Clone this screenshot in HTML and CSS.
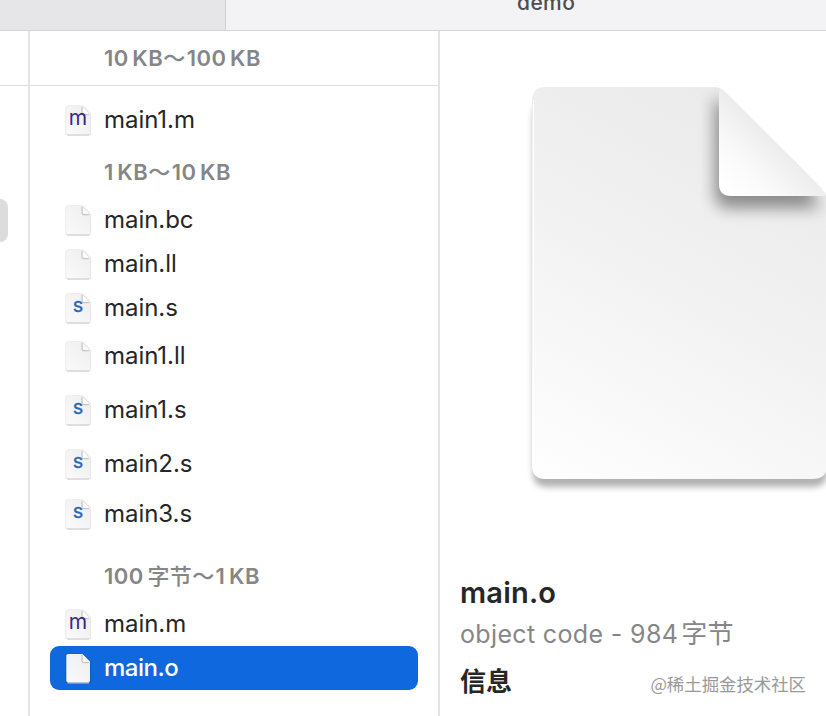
FILE: index.html
```html
<!DOCTYPE html>
<html lang="zh-CN">
<head>
<meta charset="utf-8">
<title>demo</title>
<link rel="stylesheet" href="styles.css">
</head>
<body>
<svg class="defs" width="0" height="0" aria-hidden="true">
  <defs>
    <linearGradient id="page" x1="1" y1="0" x2="0" y2="1">
      <stop offset="0" stop-color="#eeeeee"/><stop offset="1" stop-color="#fafafa"/>
    </linearGradient>
    <symbol id="doc" viewBox="0 0 30 34">
      <path d="M5 2H19.500L27.500 10V29Q27.500 31 25.500 31H5Q3 31 3 29V4Q3 2 5 2Z" fill="none" stroke="#000" stroke-opacity=".09" stroke-width="1.300"/>
      <path d="M4.800 30.800H25.700" stroke="#cecece" stroke-width="1.200" stroke-linecap="round"/>
      <path d="M5 2H19.500L27 9.500V28.500Q27 30.300 25.300 30.300H5Q3.300 30.300 3.300 28.500V3.700Q3.300 2 5 2Z" fill="url(#page)"/>
      <path d="M19.500 2.500V8.500Q19.500 10.200 21 10.200H27Z" fill="#fcfcfc"/>
      <path d="M19 3V9Q19 10.700 20.700 10.700H26" fill="none" stroke="#c6c6c6" stroke-width="1.200"/>
      <path d="M19.500 2.500L27 10" fill="none" stroke="#e2e2e2" stroke-width=".8"/>
    </symbol>
  </defs>
</svg>
<div class="window">
  <header class="bar">
    <div class="bar-side"></div>
    <div class="bar-title"><span>demo</span></div>
  </header>
  <main class="columns">
    <section class="col-left"><div class="strip"></div><div class="left-selection"></div></section>
    <section class="col-files">
      <h2 class="group group-first"><span>10 KB<i>～</i>100 KB</span></h2>
      <div class="list">
        <div class="row"><span class="icon"><svg><use href="#doc"/></svg><b class="m">m</b></span><span class="name">main1.m</span></div>
        <h2 class="group group-mid"><span>1 KB<i>～</i>10 KB</span></h2>
        <div class="row"><span class="icon"><svg><use href="#doc"/></svg></span><span class="name">main.bc</span></div>
        <div class="row"><span class="icon"><svg><use href="#doc"/></svg></span><span class="name">main.ll</span></div>
        <div class="row"><span class="icon"><svg><use href="#doc"/></svg><b class="s">s</b></span><span class="name">main.s</span></div>
        <div class="row gap-s"><span class="icon"><svg><use href="#doc"/></svg></span><span class="name">main1.ll</span></div>
        <div class="row gap-l"><span class="icon"><svg><use href="#doc"/></svg><b class="s">s</b></span><span class="name">main1.s</span></div>
        <div class="row gap-l"><span class="icon"><svg><use href="#doc"/></svg><b class="s">s</b></span><span class="name">main2.s</span></div>
        <div class="row gap-m"><span class="icon"><svg><use href="#doc"/></svg><b class="s">s</b></span><span class="name">main3.s</span></div>
        <h2 class="group group-last"><span>100 <i>字节～</i>1 KB</span></h2>
        <div class="row"><span class="icon"><svg><use href="#doc"/></svg><b class="m">m</b></span><span class="name">main.m</span></div>
        <div class="row selected"><span class="icon"><svg><use href="#doc"/></svg></span><span class="name">main.o</span></div>
      </div>
    </section>
    <section class="preview">
      <svg class="big-doc" viewBox="0 0 326 440">
        <defs>
          <linearGradient id="sheet" gradientUnits="userSpaceOnUse" x1="270" y1="70" x2="70" y2="430">
            <stop offset="0" stop-color="#ebebeb"/><stop offset=".4" stop-color="#f1f1f1"/><stop offset="1" stop-color="#fefefe"/>
          </linearGradient>
          <linearGradient id="fold" gradientUnits="userSpaceOnUse" x1="276" y1="76" x2="226" y2="128">
            <stop offset="0" stop-color="#ebebeb"/><stop offset=".6" stop-color="#fafafa"/><stop offset="1" stop-color="#fff"/>
          </linearGradient>
          <clipPath id="sheet-clip"><path d="M45 27H214Q220 27 224 31L321 128Q327 134 327 143V405Q327 419 313 419H45Q33 419 33 405V41Q33 27 45 27Z"/></clipPath>
          <filter id="soft" x="-20%" y="-20%" width="140%" height="140%"><feGaussianBlur stdDeviation="3"/></filter>
          <filter id="foldsoft" x="-40%" y="-40%" width="180%" height="180%"><feGaussianBlur stdDeviation="8"/></filter>
        </defs>
        <path d="M47 42H214L327 145V413Q327 427 313 427H47Q33 427 33 413V56Q33 42 47 42Z" opacity=".3" filter="url(#soft)"/>
        <path d="M45 27H214Q220 27 224 31L321 128Q327 134 327 143V405Q327 419 313 419H45Q32 419 32 405V41Q32 27 45 27Z" fill="url(#sheet)"/>
        <g clip-path="url(#sheet-clip)">
          <path d="M215 36V134Q215 148 229 148H320L300 110Z" opacity=".42" filter="url(#foldsoft)"/>
          <path d="M33.500 40V406" stroke="#fff" stroke-width="1.200"/>
        </g>
        <path d="M219 29Q221 28 224 31L321 128Q324 131 325 136H231Q219 136 219 124Z" fill="url(#fold)"/>
      </svg>
      <div class="info">
        <h1><span>main.o</span></h1>
        <p class="kind"><span>object code - 984<i>字节</i></span></p>
        <div class="info-foot"><h3>信息</h3><span class="mark">@稀土掘金技术社区</span></div>
      </div>
    </section>
  </main>
</div>
</body>
</html>
```
FILE: styles.css
```css
* { box-sizing: border-box; }
body { margin: 0; background: #fff; font-family: Inter, "Noto Sans CJK SC", sans-serif; color: #262626; }
h1, h2, h3, p { margin: 0; }
.defs { position: absolute; }
.window { width: 826px; height: 716px; overflow: hidden; display: flex; flex-direction: column; }
.bar { height: 31px; flex: none; display: flex; border-bottom: 1px solid #d3d3d5; background: #f3f2f5; overflow: hidden; }
.bar-side { width: 226px; background: #e6e5e8; border-right: 1px solid #cfcfd1; }
.bar-title { flex: 1; padding-left: 291px; font-size: 21px; font-weight: 500; line-height: 28px; letter-spacing: .4px; margin-top: -11px; color: #4d4d50; }
.columns { flex: 1; display: grid; grid-template-columns: 30px 410px 386px; min-height: 0; }
.col-left { border-right: 2px solid #e3e3e3; }
.strip { height: 55px; border-bottom: 1px solid #dedede; }
.left-selection { width: 8px; height: 43px; margin-top: 113px; background: #dcdcdc; border-radius: 0 8px 8px 0; }
.col-files { border-right: 2px solid #e3e3e3; }
.group { display: flex; align-items: center; padding-left: 74px; font-size: 22px; font-weight: 600; letter-spacing: .5px; word-spacing: -2.5px; color: #868686; white-space: nowrap; }
.group i { font-style: normal; font-weight: 500; letter-spacing: .4px; margin-right: 1px; }
.group-first { height: 55px; padding-bottom: 4px; border-bottom: 1px solid #dedede; }
.list { padding: 12px 20px 0; }
.list .group { padding-left: 54px; }
.group-mid { height: 56px; }
.group-last { height: 66px; padding-top: 9px; }
.row { height: 44px; display: flex; align-items: center; border-radius: 9px; padding-left: 13px; }
.gap-s { margin-top: 4px; }
.gap-m { margin-top: 6px; }
.gap-l { margin-top: 10px; }
.icon { width: 30px; height: 34px; display: grid; margin-right: 11px; }
.icon > * { grid-area: 1 / 1; }
.icon svg { width: 30px; height: 34px; margin-top: 1px; }
.icon b { justify-self: center; font-weight: 400; line-height: 29px; }
.icon .m { color: #40258a; font-size: 21px; }
.icon .s { color: #2867bd; font-size: 20px; -webkit-text-stroke: .3px #2867bd; }
.name { font-size: 24px; line-height: 44px; letter-spacing: -.05px; white-space: nowrap; }
.selected { background: #1068de; color: #fff; }
.selected .name { font-weight: 500; letter-spacing: -.5px; }
.preview { display: flex; flex-direction: column; overflow: hidden; }
.big-doc { width: 326px; height: 440px; margin: 29px 0 0 60px; flex: none; }
.info { padding-left: 20px; margin-top: 73px; }
h1 { font-size: 29px; font-weight: 600; line-height: 40px; letter-spacing: .2px; }
.kind { font-size: 25px; line-height: 42px; letter-spacing: .35px; color: #868686; white-space: nowrap; }
.kind i { font-style: normal; font-size: 26px; margin-left: 3px; }
.info-foot { display: flex; align-items: center; justify-content: space-between; padding-right: 20px; height: 49px; }
h3 { font-size: 26px; font-weight: 700; }
.mark { font-size: 17.4px; color: #999; font-family: "Noto Sans CJK SC", sans-serif; padding-top: 8px; }
```
